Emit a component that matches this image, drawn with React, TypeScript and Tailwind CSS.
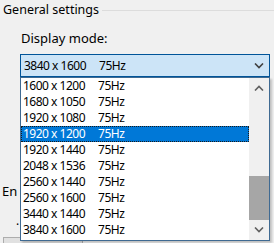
import React from 'react'

const modes = [
  '1600 x 1200',
  '1680 x 1050',
  '1920 x 1080',
  '1920 x 1200',
  '1920 x 1440',
  '2048 x 1536',
  '2560 x 1440',
  '2560 x 1600',
  '3440 x 1440',
  '3840 x 1600',
]

function Chevron({ up = false, className = '' }: { up?: boolean; className?: string }) {
  return (
    <svg width="10" height="6" viewBox="0 0 10 6" className={className}>
      <path
        d={up ? 'M1 5.5 L5 1.5 L9 5.5' : 'M1 0.5 L5 4.5 L9 0.5'}
        fill="none"
        stroke="currentColor"
        strokeWidth="1.6"
      />
    </svg>
  )
}

export default function App() {
  const selected = 3
  return (
    <div className="relative w-[274px] h-[243px] overflow-hidden bg-[#f0f0f0] text-black font-['Noto_Sans',sans-serif]">
      {/* group header */}
      <div className="flex items-center h-[20px] pl-[3px]">
        <span className="text-[12.5px] leading-[18px]">General settings</span>
        <div className="flex-1 h-px bg-[#dcdcdc] ml-[3px]" />
      </div>

      <div className="mt-[9px] pl-[21px] text-[13px] leading-[18px]">Display mode:</div>

      {/* combo box */}
      <div className="mt-[7px] ml-[20px] w-[250px] h-[23px] border border-[#005499] bg-[#cce4f7] flex items-center justify-between pl-[3px] pr-[5px]">
        <span className="text-[12px] leading-[16px] tracking-[-0.5px] whitespace-pre">
          3840 x 1600<span className="ml-[13px]">75Hz</span>
        </span>
        <Chevron className="text-[#404040]" />
      </div>

      {/* content hidden under the list */}
      <div className="mt-[106px] pl-[2px] text-[13px] leading-[17px]">En</div>
      <div className="mt-[17px] pl-[16px] text-[12px] leading-[8px]">.</div>
      <div className="mt-[12px] ml-[3px] w-[80px] h-[20px] border border-[#adadad] bg-[#e1e1e1]" />

      {/* dropdown list */}
      <div className="absolute left-[20px] top-[77px] w-[250px] h-[164px] border border-[#3f6a92] bg-white flex shadow-[2px_2px_2px_rgba(0,0,0,0.2)]">
        <div className="flex-1 flex flex-col">
          {modes.map((m, i) => (
            <div
              key={m}
              className={
                i === selected
                  ? 'h-[16px] pl-[1px] bg-[#0078d7] text-white border border-dotted border-[#1a1a1a] flex items-center text-[12px] leading-[16px] tracking-[-0.5px] whitespace-pre'
                  : 'h-[16px] pl-[2px] flex items-center text-[12px] leading-[16px] tracking-[-0.5px] whitespace-pre'
              }
            >
              {m}
              <span className="ml-[13px]">75Hz</span>
            </div>
          ))}
        </div>
        {/* scrollbar */}
        <div className="w-[20px] bg-[#f0f0f0] flex flex-col">
          <div className="h-[20px] flex items-center justify-center text-[#606060]">
            <Chevron up />
          </div>
          <div className="flex-1 flex flex-col justify-end">
            <div className="h-[44px] bg-[#a6a6a6]" />
          </div>
          <div className="h-[20px] flex items-center justify-center text-[#606060]">
            <Chevron />
          </div>
        </div>
      </div>
    </div>
  )
}
